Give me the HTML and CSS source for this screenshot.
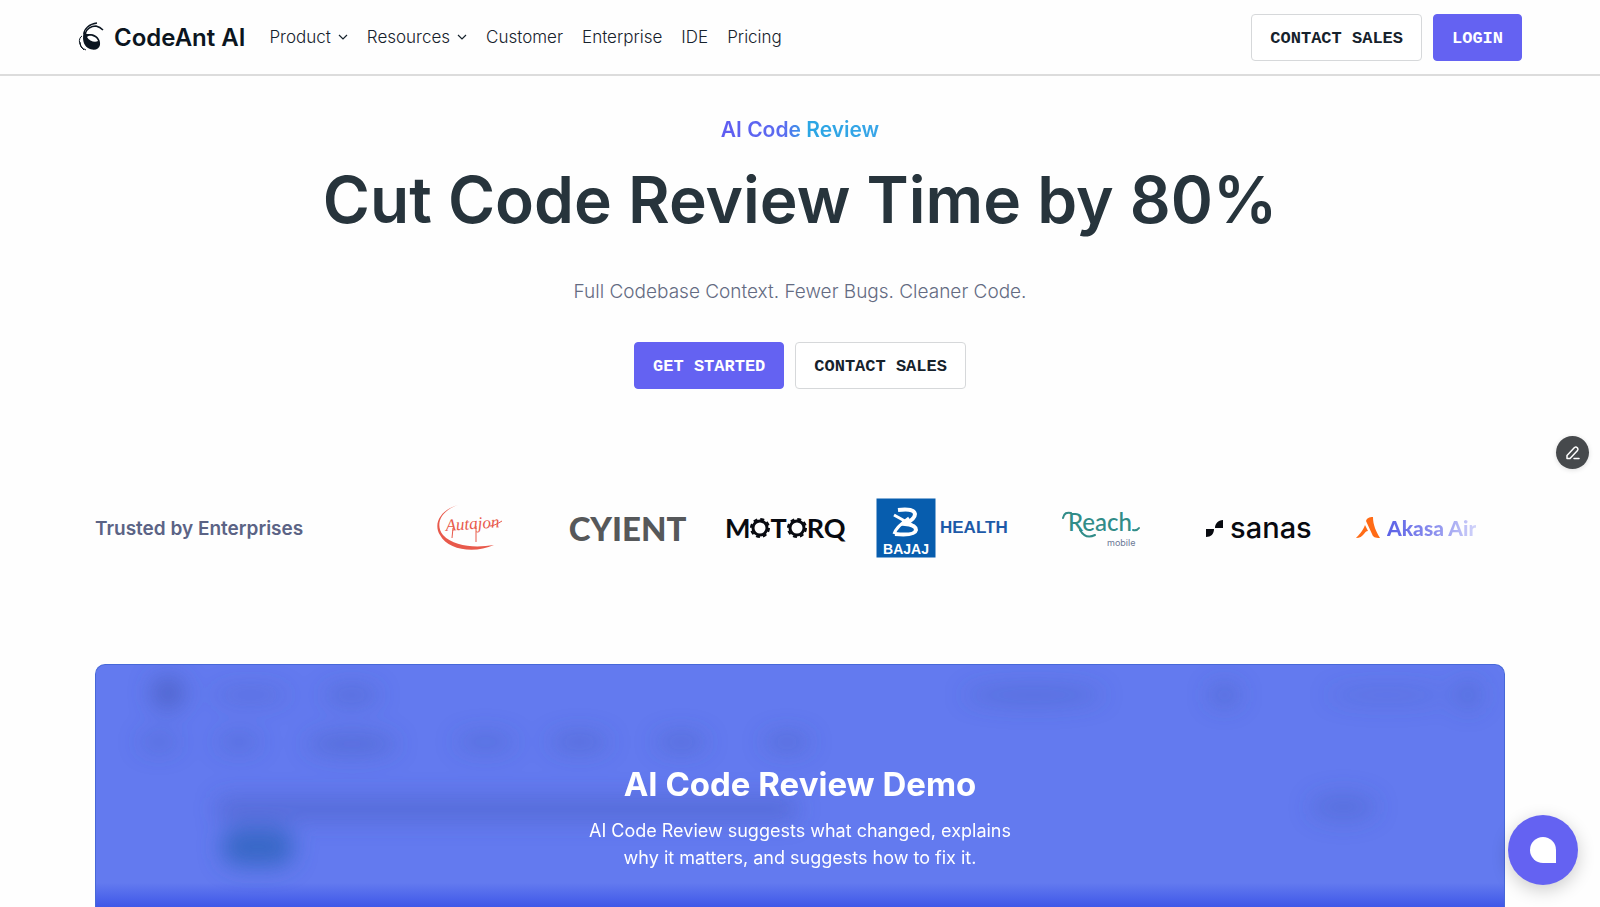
FILE: index.html
```html
<!DOCTYPE html>
<html lang="en">
<head>
<meta charset="utf-8">
<meta name="viewport" content="width=device-width, initial-scale=1">
<title>CodeAnt AI – AI Code Review</title>
<link rel="stylesheet" href="styles.css">
</head>
<body>
<header class="site-header">
  <a class="brand" href="#">
    <svg class="brand-mark" viewBox="0 0 26 30" aria-hidden="true">
      <path d="M6 12C6 7 11 2 19 1" fill="none" stroke="#0b1520" stroke-width="1.3"/>
      <path d="M7 12C8 7 13 4 18 4Q22 5 25 8" fill="none" stroke="#0b1520" stroke-width="1.6"/>
      <path d="M6 9C4 16 5 23 10 26C15 29 21 28 22 23C23 17 18 12 13 12C10 12 8 13 6 9Z" fill="#0b1520"/>
      <path d="M9 15C12 12 19 15 20 19C17 21 11 19 9 15Z" fill="#fff"/>
      <path d="M4 14C0 16 0 25 8 28M2 20Q2 26 6 28" fill="none" stroke="#0b1520" stroke-width="1"/>
    </svg>
    <span>CodeAnt AI</span>
  </a>
  <nav class="nav" aria-label="Main">
    <button class="nav-item" type="button">Product
      <svg class="chevron" viewBox="0 0 10 6" aria-hidden="true"><path d="M1 1L5 5L9 1"/></svg>
    </button>
    <button class="nav-item" type="button">Resources
      <svg class="chevron" viewBox="0 0 10 6" aria-hidden="true"><path d="M1 1L5 5L9 1"/></svg>
    </button>
    <a class="nav-item" href="#">Customer</a>
    <a class="nav-item" href="#">Enterprise</a>
    <a class="nav-item" href="#">IDE</a>
    <a class="nav-item" href="#">Pricing</a>
  </nav>
  <div class="actions">
    <a class="button" href="#">CONTACT SALES</a>
    <a class="button button-primary" href="#">LOGIN</a>
  </div>
</header>

<main class="page">
  <section class="hero">
    <p class="eyebrow">AI Code Review</p>
    <h1 class="headline">Cut Code Review Time by 80%</h1>
    <p class="lead">Full Codebase Context. Fewer Bugs. Cleaner Code.</p>
    <div class="actions">
      <a class="button button-primary" href="#">GET STARTED</a>
      <a class="button" href="#">CONTACT SALES</a>
    </div>
  </section>

  <section class="trusted">
    <h2 class="trusted-label">Trusted by Enterprises</h2>
    <ul class="logos">
      <li>
        <svg width="68" height="48" viewBox="0 0 68 48" role="img" aria-label="Autajon">
          <path d="M22 1C4 6-3 20 4 31C12 46 38 50 58 41C40 44 18 43 7 31C-1 21 4 7 22 1Z" fill="#e8594b"/>
          <text class="logo-script" x="10" y="27" transform="rotate(-4 10 27)">Autajon</text>
          <path d="M17 24L16 34M40 22L40 38M54 22Q58 22 66 17" fill="none" stroke="#e8594b" stroke-width="1"/>
        </svg>
      </li>
      <li class="cyient">CYIENT</li>
      <li class="motorq" aria-label="Motorq">
        <span>M</span>
        <svg width="20" height="20" viewBox="0 0 20 20" aria-hidden="true"><circle cx="10" cy="10" r="7" fill="none" stroke="#080a10" stroke-width="3"/><circle cx="10" cy="10" r="9" fill="none" stroke="#080a10" stroke-width="2" stroke-dasharray="4 3.07"/></svg>
        <span>T</span>
        <svg width="20" height="20" viewBox="0 0 20 20" aria-hidden="true"><circle cx="10" cy="10" r="7" fill="none" stroke="#080a10" stroke-width="3"/><circle cx="10" cy="10" r="9" fill="none" stroke="#080a10" stroke-width="2" stroke-dasharray="4 3.07"/></svg>
        <span>RQ</span>
      </li>
      <li>
        <svg width="134" height="60" viewBox="0 0 134 60" role="img" aria-label="Bajaj Health">
          <rect width="59" height="59" x="0.5" y="0.5" fill="#075dae"/>
          <path d="M22 12Q38 10 39 16Q39 21 29 26Q40 27 40 32Q39 38 19 36" fill="none" stroke="#fff" stroke-width="4"/>
          <path d="M18 17L36 27M33 20Q20 29 18 36" fill="none" stroke="#fff" stroke-width="3"/>
          <text class="logo-bajaj" x="30" y="56" text-anchor="middle">BAJAJ</text>
          <text class="logo-health" x="64" y="35">HEALTH</text>
        </svg>
      </li>
      <li>
        <svg width="78" height="48" viewBox="0 0 78 48" role="img" aria-label="Reach mobile">
          <text class="logo-reach" x="6" y="27">Reach</text>
          <path d="M1 14C2 9 5 8 9 9M18 26C22 33 27 34 33 31M71 26Q75 27 77 24" fill="none" stroke="#318c88" stroke-width="2" stroke-linecap="round"/>
          <text class="logo-mobile" x="45" y="42">mobile</text>
        </svg>
      </li>
      <li class="sanas">
        <svg width="19" height="19" viewBox="0 0 19 19" aria-hidden="true"><path d="M18 1V9H10C10 5 13 1 18 1ZM1 10H9C9 15 6 18 1 18Z" fill="#080a10"/></svg>
        <span>sanas</span>
      </li>
      <li class="akasa">
        <svg width="25" height="22" viewBox="0 0 25 22" aria-hidden="true"><path d="M10 4C11 1 13 0 17 0C17 8 20 14 24 21C19 21 17 20 16 17ZM9 8L12 14C8 14 8 21 0 21C2 19 7 14 9 8Z" fill="#ff6b16"/></svg>
        <span>Akasa Air</span>
      </li>
    </ul>
  </section>

  <section class="demo">
    <svg class="demo-backdrop" viewBox="0 0 1410 242" preserveAspectRatio="none" aria-hidden="true">
      <defs>
        <filter id="soft" x="-50%" y="-100%" width="200%" height="300%"><feGaussianBlur stdDeviation="11"/></filter>
      </defs>
      <g filter="url(#soft)" fill="#4358b8">
        <circle cx="72" cy="28" r="17" opacity=".6"/>
        <ellipse cx="155" cy="30" rx="38" ry="9" opacity=".25"/>
        <ellipse cx="256" cy="30" rx="28" ry="10" opacity=".35"/>
        <ellipse cx="63" cy="77" rx="20" ry="10" opacity=".3"/>
        <ellipse cx="143" cy="77" rx="22" ry="10" opacity=".3"/>
        <ellipse cx="256" cy="79" rx="46" ry="12" opacity=".35"/>
        <ellipse cx="390" cy="77" rx="30" ry="10" opacity=".3"/>
        <ellipse cx="484" cy="77" rx="30" ry="10" opacity=".35"/>
        <ellipse cx="586" cy="77" rx="26" ry="10" opacity=".35"/>
        <ellipse cx="692" cy="77" rx="24" ry="10" opacity=".35"/>
        <rect x="121" y="132" width="581" height="24" rx="8" opacity=".4"/>
        <ellipse cx="939" cy="30" rx="70" ry="11" opacity=".3"/>
        <ellipse cx="1130" cy="30" rx="16" ry="12" opacity=".35"/>
        <ellipse cx="1293" cy="30" rx="60" ry="10" opacity=".2"/>
        <circle cx="1374" cy="30" r="15" opacity=".3"/>
        <ellipse cx="1249" cy="142" rx="34" ry="14" opacity=".3"/>
        <rect x="126" y="163" width="72" height="38" rx="18" fill="#3767c6"/>
      </g>
    </svg>
    <div class="demo-copy">
      <h2 class="demo-title">AI Code Review Demo</h2>
      <p class="demo-text">AI Code Review suggests what changed, explains<br>why it matters, and suggests how to fix it.</p>
    </div>
  </section>
</main>

<button class="edit-button" type="button" aria-label="Edit page">
  <svg width="16" height="16" viewBox="0 0 16 16" fill="none" stroke="#fff" stroke-width="1.5" stroke-linejoin="round" stroke-linecap="round" aria-hidden="true"><path d="M2 13.5V10.5L9.5 2.5Q11 1.5 12.5 3Q13.5 4.5 12.5 5.5L5 13.5ZM9 13.5H14"/></svg>
</button>
<button class="chat-button" type="button" aria-label="Open chat">
  <svg width="26" height="26" viewBox="0 0 26 26" aria-hidden="true"><path d="M13 0A13 13 0 0 1 26 13V26H13A13 13 0 0 1 13 0Z" fill="#fff"/></svg>
</button>
</body>
</html>
```
FILE: styles.css
```css
* { box-sizing: border-box; }

body {
  margin: 0;
  min-height: 100vh;
  display: flex;
  flex-direction: column;
  background: #fefefe;
  color: #16222c;
  font-family: Inter, "Liberation Sans", sans-serif;
}

h1, h2, p, ul { margin: 0; padding: 0; }
a { color: inherit; text-decoration: none; }

.site-header {
  display: flex;
  align-items: center;
  height: 76px;
  padding: 0 78px;
  border-bottom: 2px solid #dcdcdc;
}

.brand {
  display: flex;
  align-items: center;
  gap: 10px;
  color: #0b1520;
  font-size: 24px;
  font-weight: 600;
}
.brand-mark { width: 26px; height: 30px; }

.nav {
  display: flex;
  align-items: center;
  gap: 19px;
  margin-left: 24px;
}
.nav-item {
  display: flex;
  align-items: center;
  gap: 7px;
  padding: 0;
  border: 0;
  background: none;
  color: #16222c;
  font: 300 17px/24px Inter, "Liberation Sans", sans-serif;
}
.chevron {
  width: 10px;
  height: 6px;
  fill: none;
  stroke: #16222c;
  stroke-width: 1.2;
}

.actions { display: flex; gap: 11px; }
.site-header .actions { margin-left: auto; }

.button {
  padding: 12px 18px 10px;
  border: 1px solid #d6d8da;
  border-radius: 4px;
  background: #fff;
  font: 700 17px/23px "Liberation Mono", monospace;
}
.button-primary {
  border-color: #6462f2;
  background: #6462f2;
  color: #fff;
}

.page {
  flex: 1;
  display: flex;
  flex-direction: column;
  padding: 0 95px;
}

.hero {
  display: flex;
  flex-direction: column;
  align-items: center;
  padding-top: 40px;
  text-align: center;
}
.eyebrow {
  background: linear-gradient(90deg, #5f5cf1, #5b6cf0 40%, #2ba6e4 55%, #38a5e8);
  background-clip: text;
  color: transparent;
  font-size: 21px;
  font-weight: 600;
  line-height: 28px;
}
.headline {
  margin-top: 16px;
  color: #27343c;
  font-size: 64px;
  font-weight: 600;
  line-height: 80px;
}
.lead {
  margin-top: 38px;
  color: #646b82;
  font-size: 19px;
  font-weight: 300;
  line-height: 28px;
}
.hero .actions { margin-top: 36px; }

.trusted {
  display: flex;
  align-items: center;
  height: 60px;
  margin-top: 109px;
}
.trusted-label {
  width: 296px;
  color: #5b6385;
  font-size: 19px;
  font-weight: 600;
}
.logos {
  flex: 1;
  display: grid;
  grid-template-columns: repeat(7, 1fr);
  margin-right: 10px;
  list-style: none;
}
.logos li {
  display: flex;
  align-items: center;
  justify-content: center;
}
.logo-script { fill: #e8594b; font: italic 17px "Liberation Serif", serif; }
.cyient { color: #56585a; font: 900 33px/36px Lato, sans-serif; }
.logo-bajaj { fill: #fff; font: 700 14px "Liberation Sans", sans-serif; }
.logo-health { fill: #1d5aa8; font: 700 17px "Liberation Sans", sans-serif; }
.logo-reach { fill: #318c88; font: 500 24px Lato, sans-serif; }
.logo-mobile { fill: #6b7895; font: 400 9px Inter, sans-serif; }
.motorq { color: #080a10; font: 700 27px/30px Lato, sans-serif; }
.sanas { gap: 6px; color: #080a10; font: 500 29px/32px Inter, sans-serif; }
.akasa { gap: 6px; font: 900 21px/24px Lato, sans-serif; }
.akasa span {
  background: linear-gradient(90deg, #5a60e6, #8e92ee 55%, #d2d4fa);
  background-clip: text;
  color: transparent;
}

.demo {
  position: relative;
  flex: 1;
  margin-top: 106px;
  border: 1px solid #4768d8;
  border-bottom: 0;
  border-radius: 10px 10px 0 0;
  background: linear-gradient(0deg, #3f57e8, #637aef 24px);
  overflow: hidden;
}
.demo-backdrop {
  position: absolute;
  inset: 0;
  width: 100%;
  height: 100%;
}
.demo-copy {
  position: relative;
  padding: 98px 24px 34px;
  color: #fff;
  text-align: center;
}
.demo-title { font-size: 33px; font-weight: 700; line-height: 42px; }
.demo-text { margin-top: 12px; font-size: 18px; line-height: 27px; }

.edit-button, .chat-button {
  position: fixed;
  display: flex;
  align-items: center;
  justify-content: center;
  padding: 0;
  border: 0;
  border-radius: 50%;
}
.edit-button {
  right: 11px;
  top: 436px;
  width: 33px;
  height: 33px;
  background: #46494c;
  box-shadow: 0 1px 5px #0002;
}
.chat-button {
  right: 22px;
  bottom: 22px;
  width: 70px;
  height: 70px;
  background: #6462f2;
  box-shadow: 0 5px 18px #0003;
}
```
